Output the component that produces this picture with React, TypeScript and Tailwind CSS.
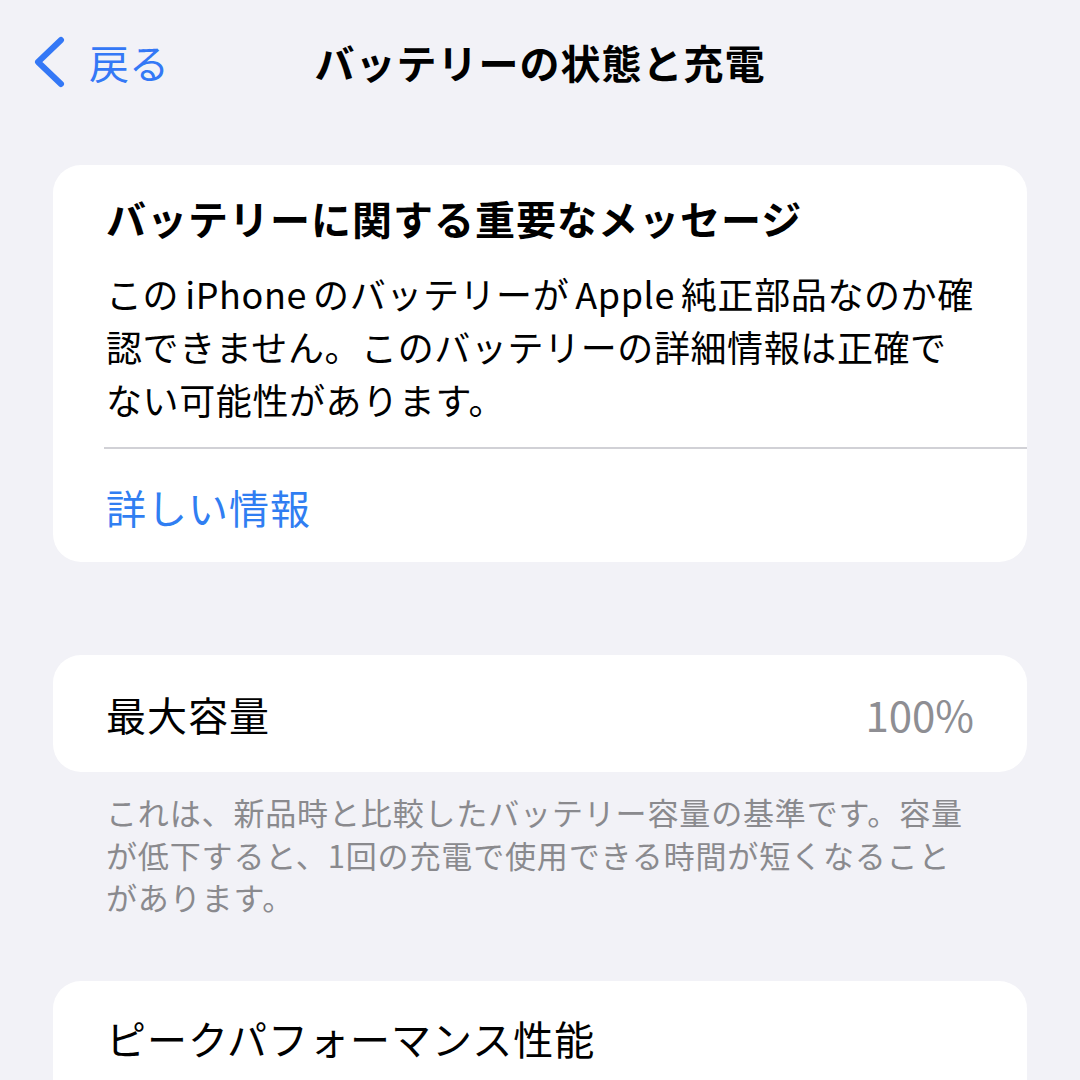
import React from "react";

const font = { fontFamily: '"Noto Sans CJK JP", "Noto Sans", sans-serif' };

export default function App() {
  return (
    <div
      className="w-[1080px] h-[1080px] overflow-hidden bg-[#f2f2f7] text-black"
      style={font}
    >
      <div className="h-[124px] grid grid-cols-[1fr_auto_1fr] items-center">
        <div className="flex items-center pl-[33px]">
          <svg width="34" height="52" viewBox="0 0 34 52" className="mr-[22px]">
            <path
              d="M28 4 L5 26 L28 48"
              fill="none"
              stroke="#3478f6"
              strokeWidth="6"
              strokeLinecap="round"
              strokeLinejoin="round"
            />
          </svg>
          <span className="text-[40px] leading-[52px] text-[#3478f6]">戻る</span>
        </div>
        <div className="text-[40px] leading-[52px] font-bold tracking-[1px]">
          バッテリーの状態と充電
        </div>
        <div />
      </div>

      <div className="mt-[41px] mx-[53px] bg-white rounded-[28px] pt-[27px] pb-[29px]">
        <div className="px-[53px] text-[40px] leading-[52px] font-bold tracking-[1px]">
          バッテリーに関する重要なメッセージ
        </div>
        <div className="px-[53px] mt-[23px] text-[36px] leading-[53px] tracking-[0.6px] whitespace-nowrap">
          <div>
            この<span className="ml-[6px]">iPhone</span>
            <span className="ml-[6px]">のバッテリーが</span>
            <span className="ml-[6px]">Apple</span>
            <span className="ml-[6px]">純正部品なのか確</span>
          </div>
          <div>認できません。このバッテリーの詳細情報は正確で</div>
          <div>ない可能性があります。</div>
        </div>
        <div className="ml-[51px] mt-[21px] h-[2px] bg-[#d1d1d6]" />
        <div className="px-[53px] mt-[32px] text-[40px] leading-[52px] tracking-[1px] text-[#307ef2]">
          詳しい情報
        </div>
      </div>

      <div className="mt-[93px] mx-[53px] bg-white rounded-[28px] h-[117px] flex items-center justify-between px-[53px]">
        <span className="text-[40px] leading-[52px] tracking-[1px]">最大容量</span>
        <span className="text-[42px] leading-[52px] text-[#8e8e93]">100%</span>
      </div>

      <div className="mt-[19px] px-[106px] text-[31px] leading-[42.5px] tracking-[0.85px] text-[#8a8a8e] whitespace-nowrap">
        <div>これは、新品時と比較したバッテリー容量の基準です。容量</div>
        <div>が低下すると、1回の充電で使用できる時間が短くなること</div>
        <div>があります。</div>
      </div>

      <div className="mt-[62px] mx-[53px] bg-white rounded-t-[28px] h-[140px] pt-[31px] px-[53px]">
        <span className="text-[40px] leading-[52px] tracking-[1px]">ピークパフォーマンス性能</span>
      </div>
    </div>
  );
}
